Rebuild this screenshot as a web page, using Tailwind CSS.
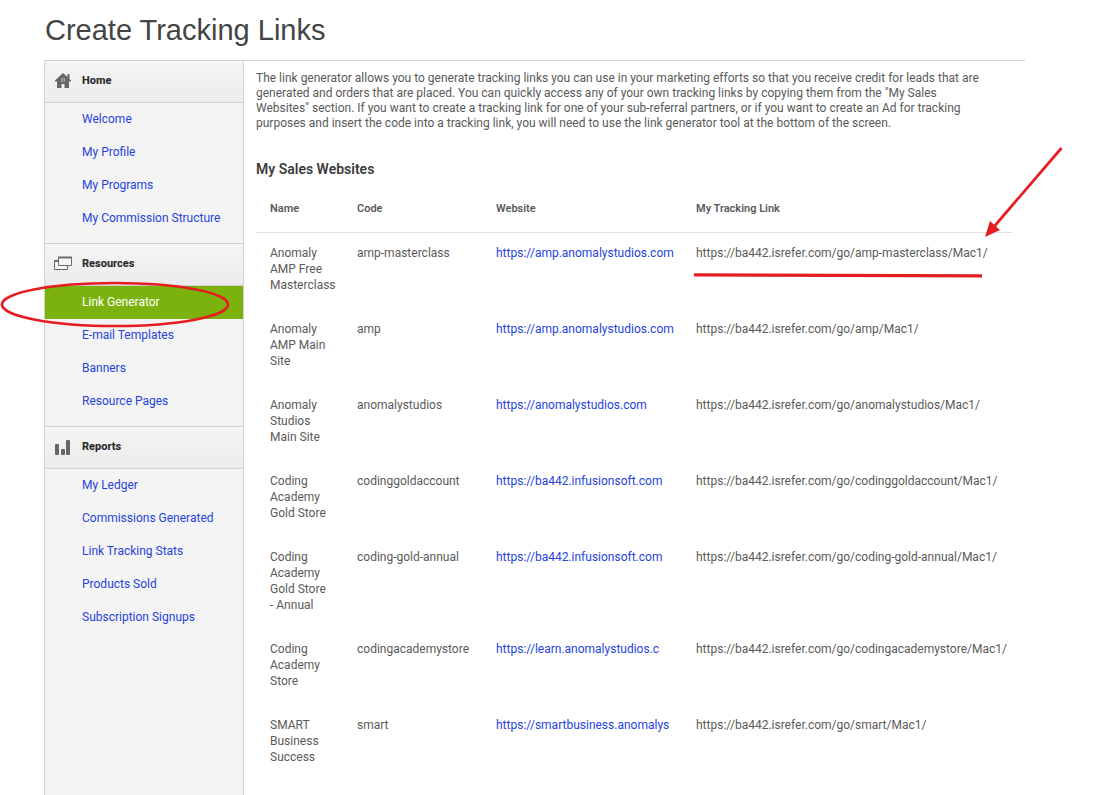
<!DOCTYPE html>
<html lang="en">
<head>
  <meta charset="UTF-8">
  <meta name="viewport" content="width=device-width, initial-scale=1.0">
  <title>Create Tracking Links</title>
  <script src="https://cdn.jsdelivr.net/npm/@tailwindcss/browser@4"></script>
</head>
<body class="relative min-h-screen flex flex-col bg-white font-[Roboto,sans-serif] text-xs text-[#5a5a5a] overflow-x-hidden">
  <h1 class="h-15 pl-[45px] pt-3 font-['Liberation_Sans',sans-serif] text-[29px] leading-9 text-[#444]">Create Tracking Links</h1>

  <div class="flex flex-1 ml-11 mr-[69px] border-t border-[#d2d2d2]">
    <!-- Sidebar -->
    <nav class="w-[200px] shrink-0 -mt-px border border-b-0 border-[#d2d2d2] bg-[#f4f4f4] text-[#2643dc]">
      <section class="mb-2">
        <h2 class="flex items-center h-[42px] border-b border-[#d2d2d2] bg-linear-to-b from-[#f5f5f5] to-[#edebec] text-[11px] font-extrabold text-[#2b2b2b]">
          <svg class="ml-2 mr-[9px] w-5 h-5 shrink-0" viewBox="0 0 20 20" fill="#666">
            <path d="M10 1L2 8.500V9.500h2V16h4.500v-4h3v4H16V9.500h2V8.500L16.500 7V2h-2v3z"/>
            <path d="M8 6.500h4v3H8z" fill="#ddd"/>
            <path d="M10 6.500v3M8 8h4" stroke="#666"/>
          </svg>
          Home
        </h2>
        <a href="#" class="block h-[33px] pl-[37px] leading-8">Welcome</a>
        <a href="#" class="block h-[33px] pl-[37px] leading-8">My Profile</a>
        <a href="#" class="block h-[33px] pl-[37px] leading-8">My Programs</a>
        <a href="#" class="block h-[33px] pl-[37px] leading-8">My Commission Structure</a>
      </section>

      <section class="mb-2 border-t border-[#d2d2d2]">
        <h2 class="flex items-center h-[42px] border-b border-[#d2d2d2] bg-linear-to-b from-[#f5f5f5] to-[#edebec] text-[11px] font-extrabold text-[#2b2b2b]">
          <svg class="ml-2 mr-[9px] w-5 h-5 shrink-0" viewBox="0 0 20 20" fill="#f6f6f6" stroke="#6b6b6b">
            <path d="M1.500 6.500h13v8h-13z"/>
            <path d="M1 6h5" stroke-width="2"/>
            <path d="M5.500 2.500h13v8h-13z"/>
            <path d="M5 2.500h14" stroke-width="2"/>
          </svg>
          Resources
        </h2>
        <a href="#" class="block h-[33px] pl-[37px] leading-8 bg-[#7cb20d] text-white">Link Generator</a>
        <a href="#" class="block h-[33px] pl-[37px] leading-8">E-mail Templates</a>
        <a href="#" class="block h-[33px] pl-[37px] leading-8">Banners</a>
        <a href="#" class="block h-[33px] pl-[37px] leading-8">Resource Pages</a>
      </section>

      <section class="border-t border-[#d2d2d2]">
        <h2 class="flex items-center h-[42px] border-b border-[#d2d2d2] bg-linear-to-b from-[#f5f5f5] to-[#edebec] text-[11px] font-extrabold text-[#2b2b2b]">
          <svg class="ml-2 mr-[9px] w-5 h-5 shrink-0" viewBox="0 0 20 20" fill="#666">
            <rect x="2" y="6" width="4" height="11" rx="1"/>
            <rect x="8" y="11" width="4" height="6" rx="1"/>
            <rect x="13" y="2" width="4" height="15" rx="1"/>
          </svg>
          Reports
        </h2>
        <a href="#" class="block h-[33px] pl-[37px] leading-8">My Ledger</a>
        <a href="#" class="block h-[33px] pl-[37px] leading-8">Commissions Generated</a>
        <a href="#" class="block h-[33px] pl-[37px] leading-8">Link Tracking Stats</a>
        <a href="#" class="block h-[33px] pl-[37px] leading-8">Products Sold</a>
        <a href="#" class="block h-[33px] pl-[37px] leading-8">Subscription Signups</a>
      </section>
    </nav>

    <!-- Content -->
    <main class="flex-1 min-w-0 pl-3 pr-3 pt-[10px]">
      <p class="leading-[15px] whitespace-nowrap">
        The link generator allows you to generate tracking links you can use in your marketing efforts so that you receive credit for leads that are<br>
        generated and orders that are placed. You can quickly access any of your own tracking links by copying them from the "My Sales<br>
        Websites" section. If you want to create a tracking link for one of your sub-referral partners, or if you want to create an Ad for tracking<br>
        purposes and insert the code into a tracking link, you will need to use the link generator tool at the bottom of the screen.
      </p>
      <h2 class="mt-7 text-sm leading-5 font-semibold text-[#3c3c3c]">My Sales Websites</h2>

      <table class="mt-[7px] w-full table-fixed text-left leading-4">
        <colgroup>
          <col class="w-[87px]">
          <col class="w-[139px]">
          <col class="w-[200px]">
          <col>
        </colgroup>
        <thead class="text-[11px]">
          <tr class="h-[46px] border-b border-[#e0e0e0]">
            <th class="pl-[14px] font-semibold">Name</th>
            <th class="pl-[14px] font-semibold">Code</th>
            <th class="pl-[14px] font-semibold">Website</th>
            <th class="pl-[14px] font-semibold">My Tracking Link</th>
          </tr>
        </thead>
        <tbody class="align-top">
          <tr>
            <td class="pl-[14px] pt-3 pb-4">Anomaly<br>AMP Free<br>Masterclass</td>
            <td class="pl-[14px] pt-3">amp-masterclass</td>
            <td class="pl-[14px] pt-3"><a href="#" class="text-[#2643dc]">https://amp.anomalystudios.com</a></td>
            <td class="pl-[14px] pt-3 whitespace-nowrap">https://ba442.isrefer.com/go/amp-masterclass/Mac1/</td>
          </tr>
          <tr>
            <td class="pl-[14px] pt-3 pb-4">Anomaly<br>AMP Main<br>Site</td>
            <td class="pl-[14px] pt-3">amp</td>
            <td class="pl-[14px] pt-3"><a href="#" class="text-[#2643dc]">https://amp.anomalystudios.com</a></td>
            <td class="pl-[14px] pt-3 whitespace-nowrap">https://ba442.isrefer.com/go/amp/Mac1/</td>
          </tr>
          <tr>
            <td class="pl-[14px] pt-3 pb-4">Anomaly<br>Studios<br>Main Site</td>
            <td class="pl-[14px] pt-3">anomalystudios</td>
            <td class="pl-[14px] pt-3"><a href="#" class="text-[#2643dc]">https://anomalystudios.com</a></td>
            <td class="pl-[14px] pt-3 whitespace-nowrap">https://ba442.isrefer.com/go/anomalystudios/Mac1/</td>
          </tr>
          <tr>
            <td class="pl-[14px] pt-3 pb-4">Coding<br>Academy<br>Gold Store</td>
            <td class="pl-[14px] pt-3">codinggoldaccount</td>
            <td class="pl-[14px] pt-3"><a href="#" class="text-[#2643dc]">https://ba442.infusionsoft.com</a></td>
            <td class="pl-[14px] pt-3 whitespace-nowrap">https://ba442.isrefer.com/go/codinggoldaccount/Mac1/</td>
          </tr>
          <tr>
            <td class="pl-[14px] pt-3 pb-4">Coding<br>Academy<br>Gold Store<br>- Annual</td>
            <td class="pl-[14px] pt-3">coding-gold-annual</td>
            <td class="pl-[14px] pt-3"><a href="#" class="text-[#2643dc]">https://ba442.infusionsoft.com</a></td>
            <td class="pl-[14px] pt-3 whitespace-nowrap">https://ba442.isrefer.com/go/coding-gold-annual/Mac1/</td>
          </tr>
          <tr>
            <td class="pl-[14px] pt-3 pb-4">Coding<br>Academy<br>Store</td>
            <td class="pl-[14px] pt-3">codingacademystore</td>
            <td class="pl-[14px] pt-3"><a href="#" class="text-[#2643dc]">https://learn.anomalystudios.c</a></td>
            <td class="pl-[14px] pt-3 whitespace-nowrap">https://ba442.isrefer.com/go/codingacademystore/Mac1/</td>
          </tr>
          <tr>
            <td class="pl-[14px] pt-3 pb-4">SMART<br>Business<br>Success</td>
            <td class="pl-[14px] pt-3">smart</td>
            <td class="pl-[14px] pt-3"><a href="#" class="text-[#2643dc]">https://smartbusiness.anomalys</a></td>
            <td class="pl-[14px] pt-3 whitespace-nowrap">https://ba442.isrefer.com/go/smart/Mac1/</td>
          </tr>
        </tbody>
      </table>
    </main>
  </div>

  <!-- Red callouts -->
  <svg class="absolute top-0 left-0 pointer-events-none" width="1094" height="340" fill="none" stroke="#e51c20">
    <ellipse cx="115" cy="304.500" rx="113" ry="21.500" stroke-width="2.700"/>
    <path d="M1061.500 148L992 229" stroke-width="2.700"/>
    <path d="M985 237l5-16 10 9z" fill="#e51c20" stroke="none"/>
    <path d="M694 274.800l288 1" stroke-width="3.200"/>
  </svg>
</body>
</html>
